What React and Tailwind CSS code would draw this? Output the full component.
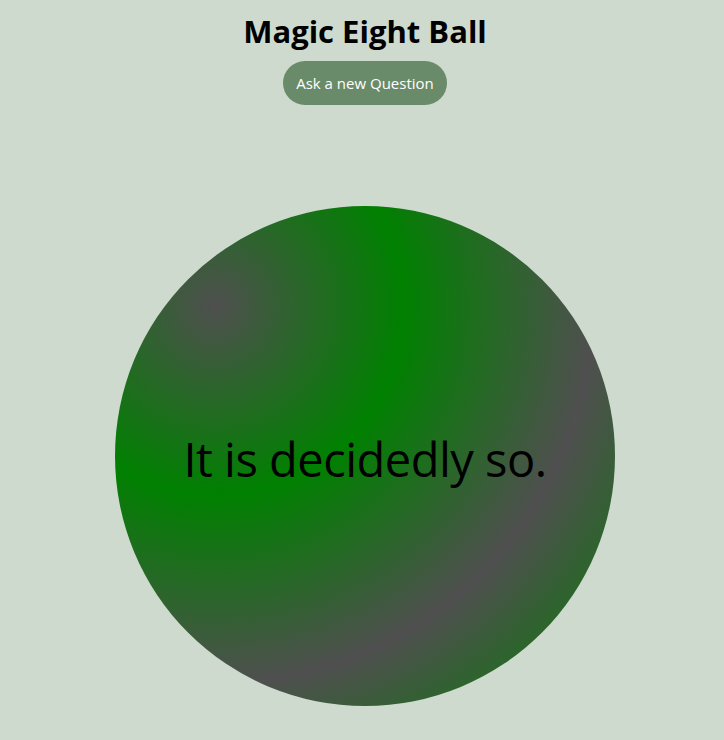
import React, { useState } from 'react';

const answers = [
  'It is certain.',
  'It is decidedly so.',
  'Without a doubt.',
  'Yes definitely.',
  'You may rely on it.',
  'As I see it, yes.',
  'Most likely.',
  'Outlook good.',
  'Yes.',
  'Signs point to yes.',
  'Reply hazy, try again.',
  'Ask again later.',
  'Better not tell you now.',
  'Cannot predict now.',
  'Concentrate and ask again.',
  "Don't count on it.",
  'My reply is no.',
  'My sources say no.',
  'Outlook not so good.',
  'Very doubtful.',
];

const App = () => {
  const [answer, setAnswer] = useState(answers[1]);

  const askQuestion = () => {
    setAnswer(answers[Math.floor(Math.random() * answers.length)]);
  };

  return (
    <div className="min-h-screen bg-[#cfdacf] pl-[6px] flex flex-col items-center font-['Open_Sans',sans-serif] text-black">
      <h1 className="mt-[11px] text-[31px] leading-[40px] font-bold">Magic Eight Ball</h1>

      <button
        onClick={askQuestion}
        className="mt-[10px] h-[44px] w-[164px] rounded-full bg-[#6a8b6a] text-white text-[15px] cursor-pointer"
      >
        Ask a new Question
      </button>

      {/* Ball */}
      <div className="mt-[101px] w-[500px] h-[500px] rounded-full flex items-center justify-center bg-[radial-gradient(circle_at_20%_20%,#4f4f4f,#008000,#4f4f4f,#008000)]">
        <p className="text-[47px] leading-none tracking-[-0.5px] mt-[6px]">{answer}</p>
      </div>
    </div>
  );
};

export default App;
